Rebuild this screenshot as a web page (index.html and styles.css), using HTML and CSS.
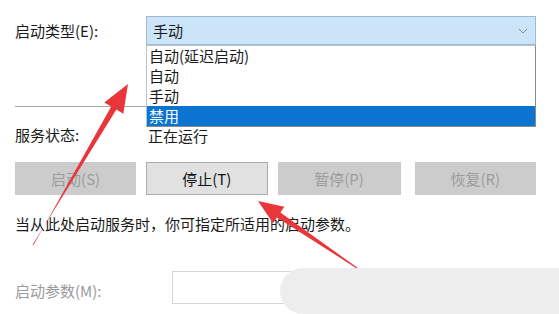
FILE: index.html
```html
<!DOCTYPE html>
<html lang="zh-CN">
<head>
<meta charset="UTF-8">
<meta name="viewport" content="width=device-width, initial-scale=1.0">
<title>服务属性</title>
<link rel="stylesheet" href="styles.css">
</head>
<body>
<div class="panel">
    <div class="row type-row">
        <div class="label">启动类型(E):</div>
        <div class="combo">
            <span>手动</span>
            <svg class="chevron" width="10" height="6" viewBox="0 0 10 6"><path d="M1 1 L5 5 L9 1" fill="none" stroke="#8a8a8a" stroke-width="1"/></svg>
            <ul class="dropdown">
                <li>自动(延迟启动)</li>
                <li>自动</li>
                <li>手动</li>
                <li class="selected">禁用</li>
            </ul>
        </div>
    </div>

    <div class="separator"></div>

    <div class="row status-row">
        <div class="label">服务状态:</div>
        <div class="value">正在运行</div>
    </div>

    <div class="buttons">
        <button class="btn" disabled>启动(S)</button>
        <button class="btn">停止(T)</button>
        <button class="btn" disabled>暂停(P)</button>
        <button class="btn" disabled>恢复(R)</button>
    </div>

    <p class="desc">当从此处启动服务时，你可指定所适用的启动参数。</p>

    <div class="row param-row">
        <div class="label muted">启动参数(M):</div>
        <div class="input"></div>
    </div>
</div>

<!-- 水印遮挡 -->
<div class="blob"></div>

<!-- 标注箭头 -->
<svg class="arrows" width="559" height="314" viewBox="0 0 559 314">
    <polygon fill="#e8363b" points="33.4,245.3 111.2,106.6 104.3,102.5 128,84 123.3,113.7 116.4,109.6 32.6,244.7"/>
    <polygon fill="#e8363b" points="357.3,267.6 280.4,212.5 284.3,206.7 258,201 273.1,223.3 277,217.5 356.7,268.4"/>
</svg>
</body>
</html>
```

FILE: styles.css
```css
body {
    margin: 0;
    font-family: "Noto Sans CJK SC", "Liberation Sans", sans-serif;
    font-size: 15px;
    color: #1a1a1a;
    background: #fff;
    width: 559px;
    height: 314px;
    overflow: hidden;
    position: relative;
}
.panel {
    padding: 16px 23px 0 15px;
}
.row {
    display: flex;
    align-items: center;
}
.label {
    width: 131px;
    line-height: 20px;
}
.muted {
    color: #9a9a9a;
    width: 157px;
}
.type-row {
    height: 29px;
}
.combo {
    position: relative;
    flex: 1;
    height: 29px;
    box-sizing: border-box;
    border: 1px solid #9db9d4;
    background: #cce4f7;
    display: flex;
    align-items: center;
    padding-left: 6px;
}
.combo span {
    flex: 1;
}
.chevron {
    margin-right: 7px;
}
.dropdown {
    position: absolute;
    top: 28px;
    left: -1px;
    right: -1px;
    margin: 0;
    padding: 0;
    list-style: none;
    background: #fff;
    border: 1px solid #b9c4cf;
    border-right-color: #8a8a8a;
    border-bottom-color: #8a8a8a;
    z-index: 2;
}
.dropdown li {
    height: 20px;
    line-height: 20px;
    padding-left: 2px;
}
.dropdown li.selected {
    background: #0a74d0;
    color: #fff;
}
.separator {
    height: 1px;
    background: #a8a8a8;
    margin-top: 61px;
}
.status-row {
    margin-top: 18px;
    height: 20px;
}
.value {
    padding-left: 2px;
}
.buttons {
    display: flex;
    gap: 10px;
    margin-top: 17px;
}
.btn {
    width: 122px;
    height: 33px;
    font-family: inherit;
    font-size: 15px;
    border: 1px solid #cccccc;
    background: #cccccc;
    color: #9c9c9c;
    padding: 0;
}
.btn:nth-child(3) {
    width: 124px;
}
.btn:nth-child(4) {
    margin-left: 4px;
}
.btn:not([disabled]) {
    background: #e1e1e1;
    border-color: #adadad;
    color: #111;
}
.desc {
    margin: 19px 0 0;
    line-height: 20px;
}
.param-row {
    margin-top: 37px;
    height: 33px;
}
.param-row .label {
    position: relative;
    top: 3px;
}
.input {
    width: 200px;
    height: 33px;
    box-sizing: border-box;
    border: 1px solid #d6d6d6;
}
.blob {
    position: absolute;
    left: 280px;
    top: 268px;
    width: 279px;
    height: 46px;
    border-radius: 23px 0 0 23px;
    background: #ededed;
}
.arrows {
    position: absolute;
    left: 0;
    top: 0;
    z-index: 3;
}
```
